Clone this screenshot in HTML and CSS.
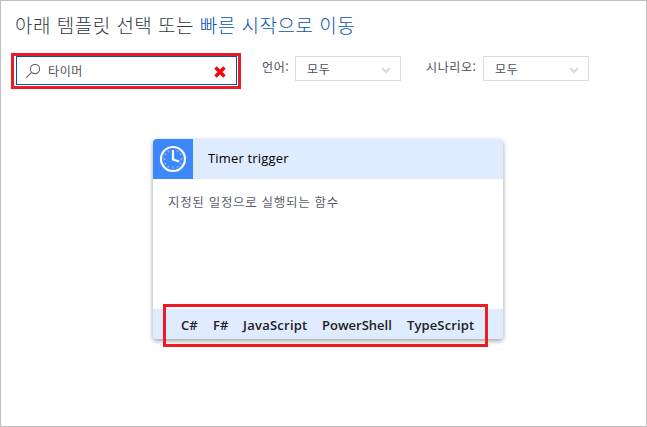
FILE: index.html
```html
<!DOCTYPE html>
<html lang="ko">
<head>
<meta charset="utf-8">
<title>템플릿 선택</title>
<link rel="stylesheet" href="styles.css">
</head>
<body>
<main class="page">
  <h1 class="title">아래 템플릿 선택 또는 <a class="link">빠른 시작으로 이동</a></h1>
  <div class="filters">
    <div class="search-highlight">
      <div class="search">
        <svg class="search-icon" width="16" height="16" viewBox="0 0 16 16"><circle cx="10" cy="6" r="4.6"/><path d="M6.7 9.3 1.2 14.6"/></svg>
        <span class="query">타이머</span>
        <svg class="clear" width="12" height="12" viewBox="0 0 12 12"><path d="M1.500 1.500l9 9M10.500 1.500l-9 9"/></svg>
      </div>
    </div>
    <span class="label language">언어:</span>
    <div class="select"><span>모두</span><svg class="chevron" width="10" height="7" viewBox="0 0 10 7"><path d="M1 1l4 4 4-4"/></svg></div>
    <span class="label scenario">시나리오:</span>
    <div class="select"><span>모두</span><svg class="chevron" width="10" height="7" viewBox="0 0 10 7"><path d="M1 1l4 4 4-4"/></svg></div>
  </div>
  <article class="card">
    <header class="card-head">
      <svg class="clock" width="40" height="40" viewBox="0 0 40 40">
        <rect width="40" height="40" fill="#3c87fc"/>
        <circle cx="20" cy="20" r="12" fill="none" stroke="#fff" stroke-width="2.2"/>
        <path class="ticks" d="M20 29.500v-2M10.500 20h2M27.500 20h2M14.800 11.500l1 1.600M25.200 11.500l-1 1.600M11.500 14.800l1.600 1M28.500 14.800l-1.600 1M11.500 25.200l1.600-1M28.500 25.200l-1.600-1M14.800 28.500l1-1.600M25.200 28.500l-1-1.600"/>
        <path d="M20 11v9.500l6.200 2" fill="none" stroke="#fff" stroke-width="2.2"/>
      </svg>
      <span class="name">Timer trigger</span>
    </header>
    <p class="description">지정된 일정으로 실행되는 함수</p>
    <footer class="card-foot">
      <div class="languages"><span class="cs">C#</span><span class="fs">F#</span><span class="js">JavaScript</span><span class="ps">PowerShell</span><span class="ts">TypeScript</span></div>
    </footer>
  </article>
</main>
</body>
</html>
```
FILE: styles.css
```css
* { box-sizing: border-box; }
body { margin: 0; background: #fff; font-family: "Noto Sans", "Noto Sans CJK KR", sans-serif; }
svg { display: block; flex: none; }
.page { width: 647px; height: 427px; border: 1px solid #c0c0c0; overflow: hidden; }
.title { margin: 9px 0 0 14px; height: 31px; line-height: 30px; font-family: "Noto Sans CJK KR", sans-serif; font-size: 19px; font-weight: 300; letter-spacing: .48px; color: #303844; white-space: nowrap; }
.link { color: #0b52aa; }
.filters { display: flex; align-items: flex-start; margin: 12px 0 0 10px; height: 36px; font-family: "Noto Sans CJK KR", sans-serif; font-size: 12px; font-weight: 400; letter-spacing: .6px; color: #4a515c; white-space: nowrap; }
.search-highlight { width: 230px; height: 36px; border: 3px solid #ed1c24; padding: 0 1px 1px 2px; flex: none; }
.search { display: flex; align-items: center; width: 221px; height: 29px; border: 1px solid #0055a5; padding: 0 10px 0 8px; }
.search-icon { fill: none; stroke: #5d6570; stroke-width: 1.1; }
.query { margin-left: 7px; line-height: 27px; height: 28px; flex: 1; }
.clear { stroke: #fa0505; stroke-width: 3.4; margin-top: 3px; }
.label { height: 30px; line-height: 28px; flex: none; }
.language { margin-left: 21px; width: 33px; }
.scenario { margin-left: 25px; width: 57px; }
.select { display: flex; align-items: center; justify-content: space-between; width: 106px; height: 25px; margin-top: 3px; padding: 0 9px 0 11px; border: 1px solid #d3dde5; line-height: 25px; flex: none; }
.chevron { fill: none; stroke: #d3dde5; stroke-width: 2; margin-top: 4px; }
.card { display: flex; flex-direction: column; width: 350px; height: 200px; margin: 50px 0 0 152px; border-radius: 4px; background: #fff; box-shadow: 0 2px 5px rgba(0,0,0,.38); }
.card-head { display: flex; height: 40px; background: #dfebfe; border-radius: 4px 4px 0 0; overflow: hidden; }
.ticks { stroke: #9dc2ff; stroke-width: 1.3; fill: none; }
.name { margin-left: 15px; line-height: 39px; font-family: "Open Sans", sans-serif; font-size: 13px; letter-spacing: .18px; color: #000; }
.description { margin: 0; padding: 12px 15px; flex: 1; line-height: 22px; font-family: "Noto Sans CJK KR", sans-serif; font-size: 12.5px; font-weight: 400; letter-spacing: .68px; color: #5a606b; white-space: nowrap; }
.card-foot { height: 30px; background: #dfebfe; border-radius: 0 0 4px 4px; }
.languages { display: flex; width: 325px; height: 43px; margin: -5px 0 0 10px; padding-left: 15px; border: 3px solid #ed1c24; font-family: "Open Sans", sans-serif; font-size: 13px; font-weight: 600; letter-spacing: .12px; color: #222; line-height: 36px; white-space: nowrap; }
.cs { width: 32px; }
.fs { width: 30px; }
.js { width: 79px; letter-spacing: .25px; }
.ps { width: 85px; letter-spacing: 0; }
```
